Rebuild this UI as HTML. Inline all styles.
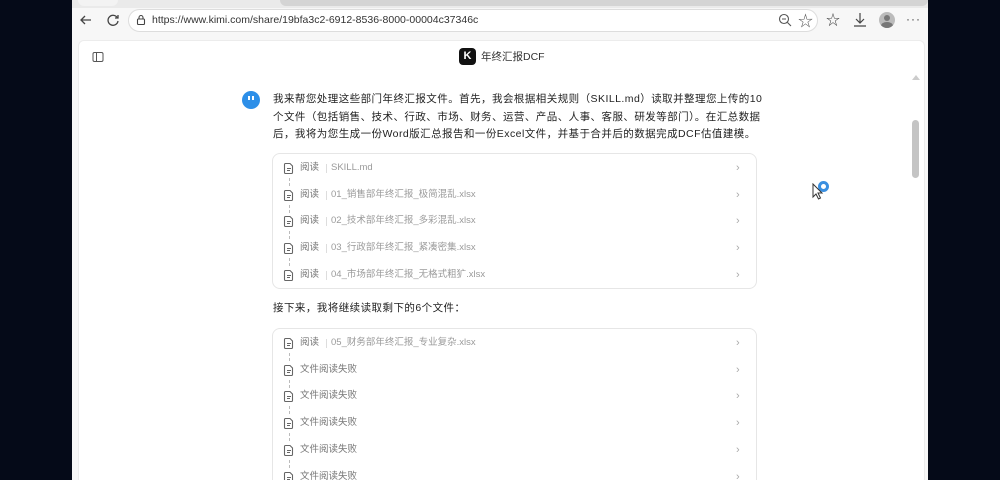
<!DOCTYPE html>
<html style="width:1000px;height:480px;overflow:hidden"><head><meta charset="utf-8"><style>
*{margin:0;padding:0;box-sizing:border-box}
body{width:1000px;height:480px;overflow:hidden;background:#050a18;font-family:"Liberation Sans","Noto Sans CJK SC",sans-serif;position:relative}
.a{position:absolute}
.win{left:72px;top:0;width:856px;height:480px;background:#f7f7f7}
.tabs{left:72px;top:0;width:856px;height:8px;background:#eaeaea}
.tab{left:78px;top:0;width:40px;height:6px;background:#f3f3f3;border-radius:0 0 6px 6px}
.tab2{left:280px;top:0;width:648px;height:6px;background:#d4d4d4;border-radius:0 0 6px 6px}
.url{left:128px;top:9px;width:690px;height:23px;border:1px solid #ddd;border-radius:12px;background:#fff;font-size:10.5px;color:#333;line-height:21px;padding-left:23px}
.card{left:78px;top:40px;width:847px;height:445px;background:#fff;border:1px solid #ececec;border-radius:6px}
.p{left:273px;font-size:10.5px;color:#222;line-height:17.5px;width:490px;letter-spacing:0.45px}
.box{left:272px;width:485px;border:1px solid #e6e6e6;border-radius:8px;background:#fff;overflow:hidden}
.row{position:absolute;left:0;width:485px;height:20px;font-size:9.5px;color:#888;line-height:20px}
.row .ic{position:absolute;left:10px;top:4px}
.row .l{position:absolute;left:27px;color:#777}
.row .s{position:absolute;left:53px;top:6px;width:1px;height:9px;background:#ddd}
.row .f{position:absolute;left:58px;color:#9a9a9a}
.row .c{position:absolute;left:463px;top:0;color:#aaa;font-size:11px}
.dash{position:absolute;left:16px;width:0;height:8px;border-left:1px dashed #bbb}
</style></head><body>
<svg width="0" height="0" style="position:absolute"><defs><symbol id="fi" viewBox="0 0 12 12"><path d="M2.5 1.5h4.5l2.5 2.5v6.5a1 1 0 0 1-1 1h-6a1 1 0 0 1-1-1v-8a1 1 0 0 1 1-1z" fill="none" stroke="#666" stroke-width="1.1"/><path d="M4 6.5h4M4 8.5h3" stroke="#666" stroke-width="1"/></symbol></defs></svg>
<div class="a win"></div>
<div class="a tabs"></div><div class="a tab"></div><div class="a tab2"></div>
<svg class="a" style="left:78px;top:12px" width="16" height="16" viewBox="0 0 16 16" fill="none" stroke="#444" stroke-width="1.3"><path d="M13 8H3M7 4L3 8l4 4"/></svg>
<svg class="a" style="left:105px;top:12px" width="16" height="16" viewBox="0 0 16 16" fill="none" stroke="#444" stroke-width="1.3"><path d="M12.5 6A5 5 0 1 0 13 9"/><path d="M13 3v3h-3"/></svg>
<div class="a url">https://www.kimi.com/share/19bfa3c2-6912-8536-8000-00004c37346c</div>
<svg class="a" style="left:135px;top:14px" width="12" height="12" viewBox="0 0 12 12" fill="none" stroke="#444" stroke-width="1.1"><rect x="2.5" y="5" width="7" height="5.5" rx="1"/><path d="M4 5V3.5a2 2 0 0 1 4 0V5"/></svg>
<svg class="a" style="left:778px;top:13px" width="14" height="14" viewBox="0 0 14 14" fill="none" stroke="#555" stroke-width="1.1"><circle cx="6" cy="6" r="4.5"/><path d="M4 6h4M9.5 9.5L13 13"/></svg>
<div class="a" style="left:798px;top:10px;font-size:15px;color:#555">☆</div>
<div class="a" style="left:826px;top:10px;font-size:14px;color:#444">☆</div>
<svg class="a" style="left:853px;top:12px" width="14" height="16" viewBox="0 0 14 16" fill="none" stroke="#444" stroke-width="1.2"><path d="M7 1v10M3 7l4 4 4-4M1 14h12"/></svg>
<div class="a" style="left:879px;top:12px;width:16px;height:16px;border-radius:50%;background:#bbb;overflow:hidden"><div class="a" style="left:5px;top:3px;width:6px;height:6px;border-radius:50%;background:#777"></div><div class="a" style="left:2px;top:10px;width:12px;height:8px;border-radius:50%;background:#777"></div></div>
<div class="a" style="left:906px;top:12px;font-size:12px;color:#444;letter-spacing:1px">···</div>
<div class="a card"></div>
<svg class="a" style="left:92px;top:51px" width="12" height="12" viewBox="0 0 12 12" fill="none" stroke="#555" stroke-width="1"><rect x="1" y="1.5" width="10" height="9" rx="1.5"/><path d="M4.5 1.5v9"/></svg>
<div class="a" style="left:459px;top:48px;width:17px;height:17px;border-radius:4px;background:#111;color:#fff;font-size:11px;font-weight:bold;text-align:center;line-height:17px">K</div>
<div class="a" style="left:481px;top:49px;font-size:10.5px;color:#333">年终汇报DCF</div>
<div class="a" style="left:242px;top:91px;width:18px;height:18px;border-radius:50%;background:#2d8fe8"><div class="a" style="left:6px;top:5px;width:2px;height:4px;background:#fff"></div><div class="a" style="left:10px;top:5px;width:2px;height:4px;background:#fff"></div></div>
<div class="a p" style="top:91px">我来帮您处理这些部门年终汇报文件。首先，我会根据相关规则（SKILL.md）读取并整理您上传的10<br>个文件（包括销售、技术、行政、市场、财务、运营、产品、人事、客服、研发等部门）。在汇总数据<br>后，我将为您生成一份Word版汇总报告和一份Excel文件，并基于合并后的数据完成DCF估值建模。</div>
<div class="a box" style="top:153px;height:136px">
<div class="row" style="top:4px"><svg class="ic" width="12" height="12"><use href="#fi"/></svg><span class="l">阅读</span><span class="s"></span><span class="f">SKILL.md</span><span class="c">›</span></div>
<div class="dash" style="top:24px"></div>
<div class="row" style="top:31px"><svg class="ic" width="12" height="12"><use href="#fi"/></svg><span class="l">阅读</span><span class="s"></span><span class="f">01_销售部年终汇报_极简混乱.xlsx</span><span class="c">›</span></div>
<div class="dash" style="top:51px"></div>
<div class="row" style="top:57px"><svg class="ic" width="12" height="12"><use href="#fi"/></svg><span class="l">阅读</span><span class="s"></span><span class="f">02_技术部年终汇报_多彩混乱.xlsx</span><span class="c">›</span></div>
<div class="dash" style="top:77px"></div>
<div class="row" style="top:84px"><svg class="ic" width="12" height="12"><use href="#fi"/></svg><span class="l">阅读</span><span class="s"></span><span class="f">03_行政部年终汇报_紧凑密集.xlsx</span><span class="c">›</span></div>
<div class="dash" style="top:104px"></div>
<div class="row" style="top:111px"><svg class="ic" width="12" height="12"><use href="#fi"/></svg><span class="l">阅读</span><span class="s"></span><span class="f">04_市场部年终汇报_无格式粗犷.xlsx</span><span class="c">›</span></div>
</div>
<div class="a p" style="top:300px">接下来，我将继续读取剩下的6个文件：</div>
<div class="a box" style="top:328px;height:160px">
<div class="row" style="top:4px"><svg class="ic" width="12" height="12"><use href="#fi"/></svg><span class="l">阅读</span><span class="s"></span><span class="f">05_财务部年终汇报_专业复杂.xlsx</span><span class="c">›</span></div>
<div class="dash" style="top:24px"></div>
<div class="row" style="top:31px"><svg class="ic" width="12" height="12"><use href="#fi"/></svg><span class="l">文件阅读失败</span><span class="c">›</span></div>
<div class="dash" style="top:51px"></div>
<div class="row" style="top:57px"><svg class="ic" width="12" height="12"><use href="#fi"/></svg><span class="l">文件阅读失败</span><span class="c">›</span></div>
<div class="dash" style="top:77px"></div>
<div class="row" style="top:84px"><svg class="ic" width="12" height="12"><use href="#fi"/></svg><span class="l">文件阅读失败</span><span class="c">›</span></div>
<div class="dash" style="top:104px"></div>
<div class="row" style="top:111px"><svg class="ic" width="12" height="12"><use href="#fi"/></svg><span class="l">文件阅读失败</span><span class="c">›</span></div>
<div class="dash" style="top:131px"></div>
<div class="row" style="top:138px"><svg class="ic" width="12" height="12"><use href="#fi"/></svg><span class="l">文件阅读失败</span><span class="c">›</span></div>
</div>
<div class="a" style="left:912px;top:75px;width:0;height:0;border-left:4px solid transparent;border-right:4px solid transparent;border-bottom:5px solid #ccc"></div>
<div class="a" style="left:912px;top:120px;width:7px;height:58px;border-radius:4px;background:#c4c4c4"></div>
<div class="a" style="left:818px;top:181px;width:11px;height:11px;border-radius:50%;border:3px solid #3a8fe0"></div>
<svg class="a" style="left:812px;top:183px" width="12" height="17" viewBox="0 0 12 17"><path d="M1 1v13l3-3 2.5 5 2-1-2.5-5h4z" fill="#fff" stroke="#333" stroke-width="1"/></svg>
</body></html>
